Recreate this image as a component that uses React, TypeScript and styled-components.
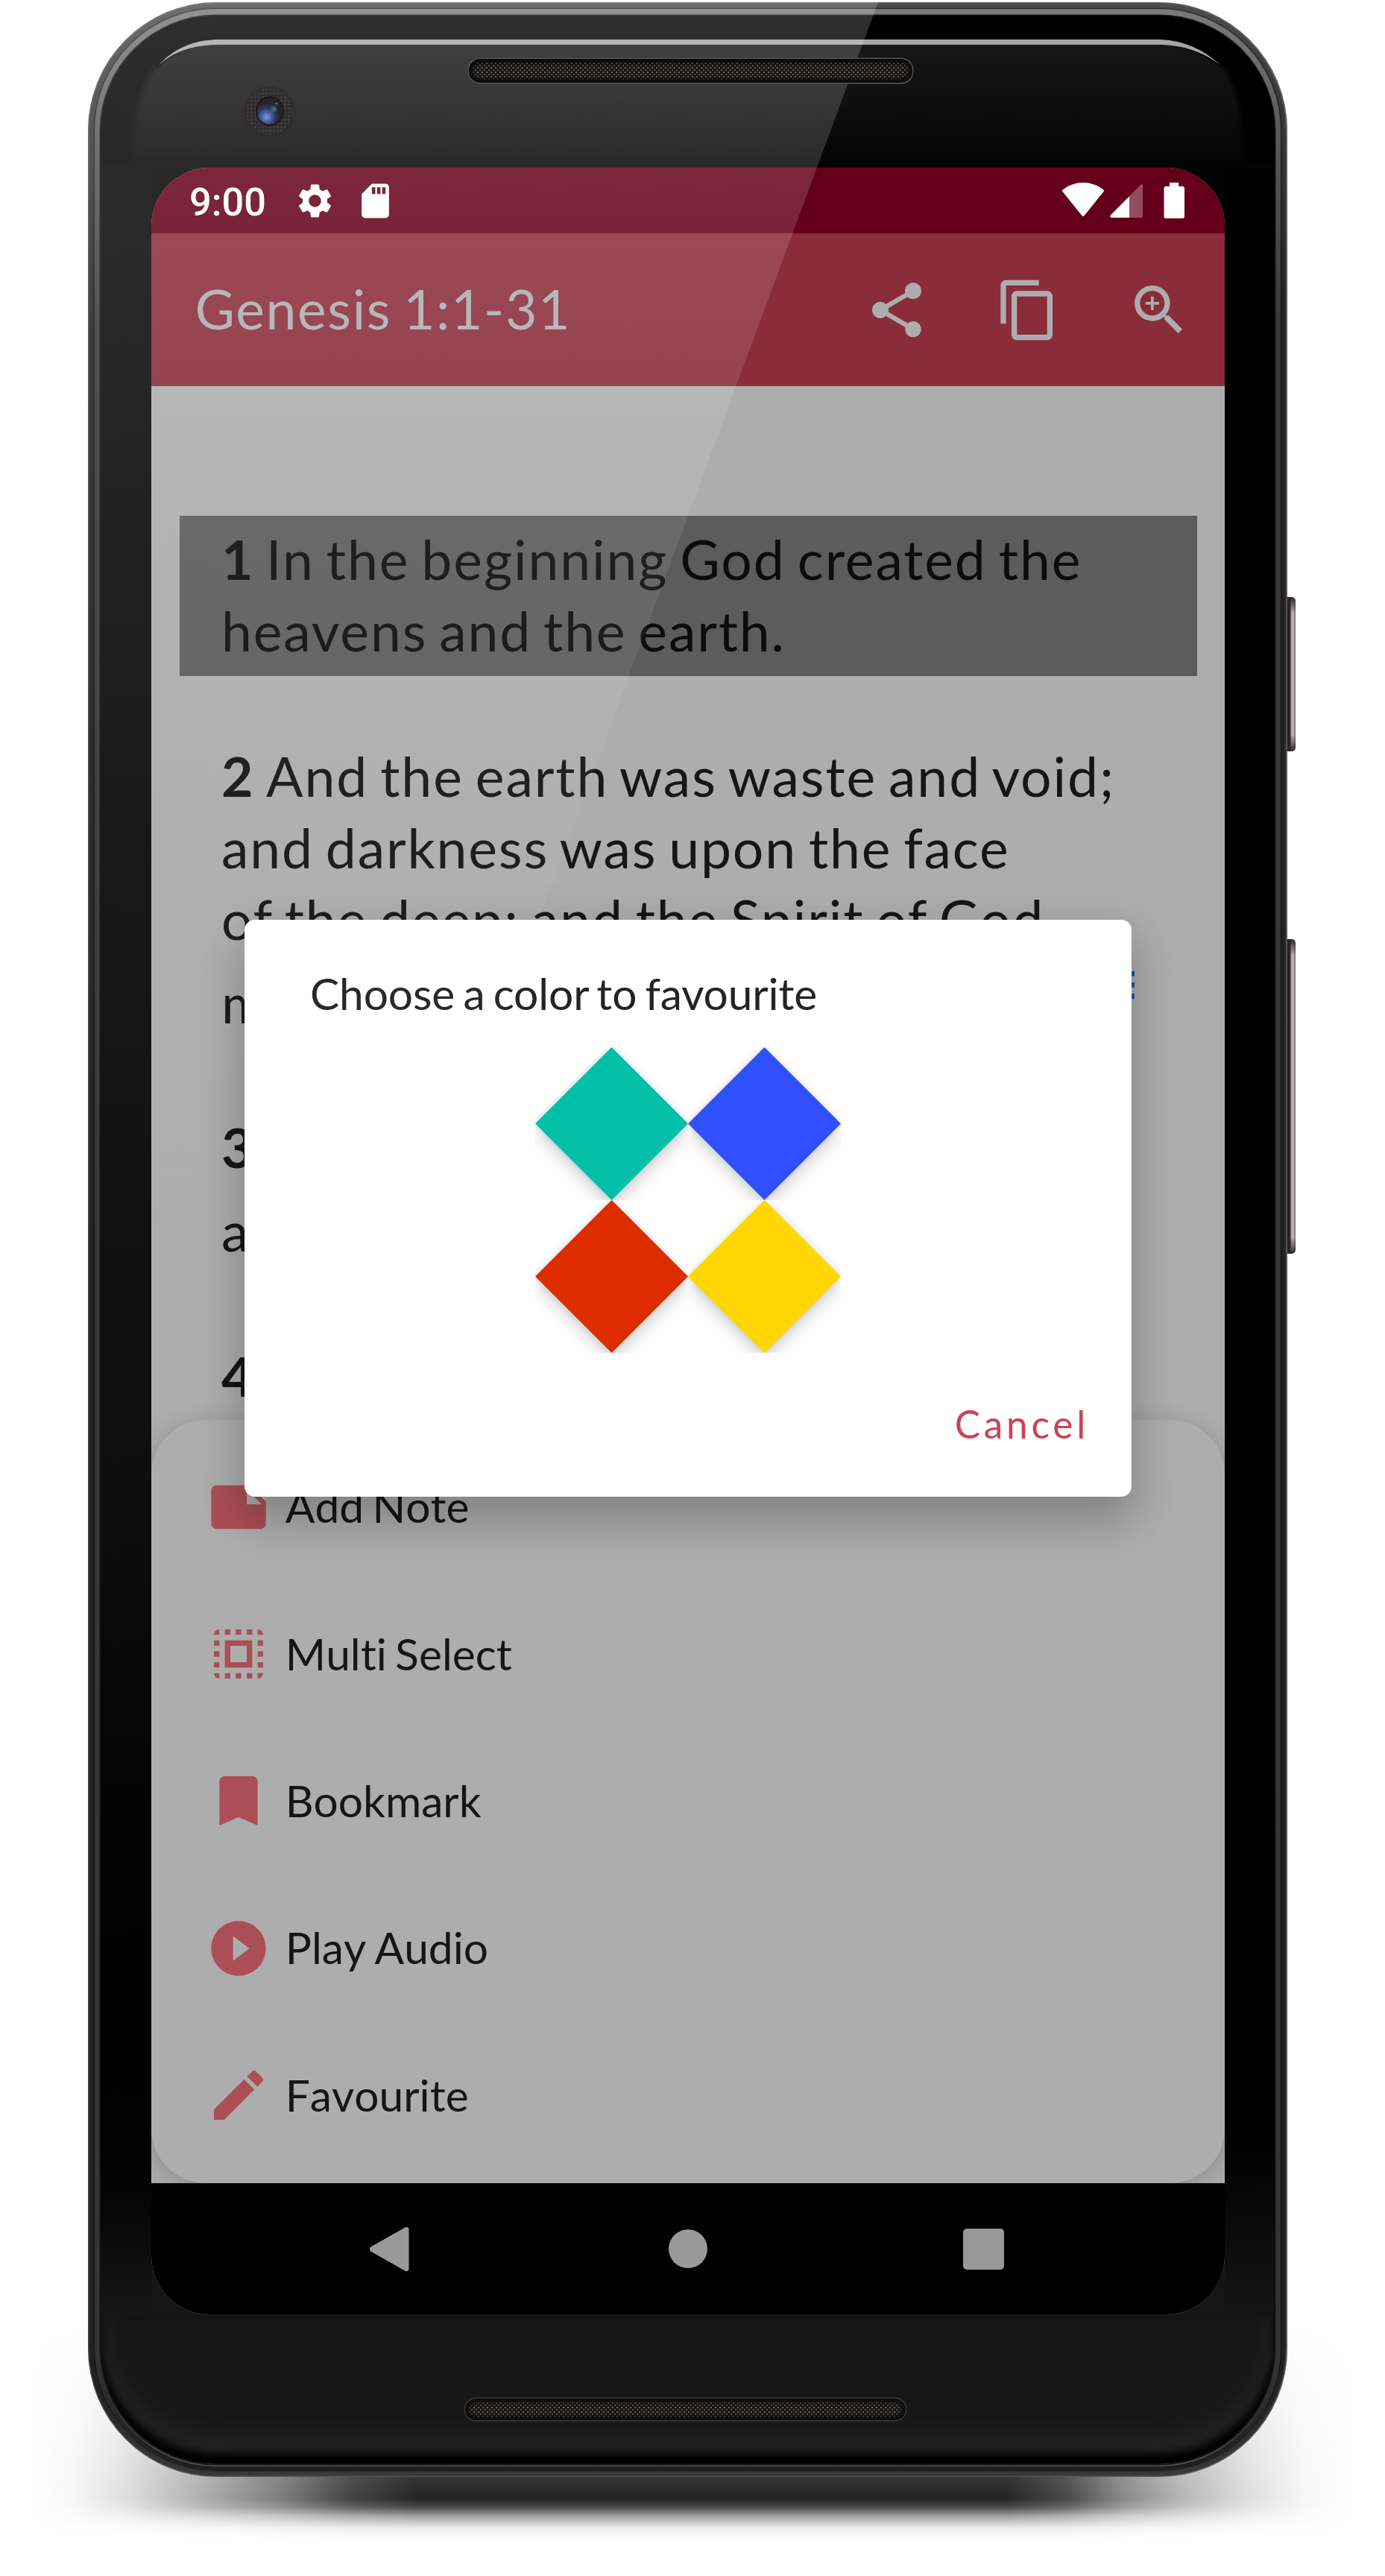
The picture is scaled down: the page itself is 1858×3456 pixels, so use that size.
import React from 'react';
import styled, { createGlobalStyle } from 'styled-components';
import type { IconType } from 'react-icons';
import {
  MdBookmark,
  MdContentCopy,
  MdEdit,
  MdNote,
  MdPlayCircleFilled,
  MdSdCard,
  MdSelectAll,
  MdSettings,
  MdShare,
  MdZoomIn,
} from 'react-icons/md';

const GlobalStyle = createGlobalStyle`
  *, *::before, *::after { box-sizing: border-box; }
  body { margin: 0; background: #fff; }
`;

/* ---------- device hardware ---------- */

const Stage = styled.main`
  position: relative;
  width: 1858px;
  height: 3456px;
  padding: 3px 0 0 118px;
  overflow: hidden;
  background: #fff;
  font-family: Lato, 'Liberation Sans', sans-serif;
  font-variant-ligatures: none;
`;

const GroundShadow = styled.div`
  position: absolute;
  left: 40px;
  top: 3120px;
  width: 1780px;
  height: 286px;
  background: linear-gradient(
    90deg,
    rgba(20, 20, 20, 0) 0,
    rgba(20, 20, 20, 0.04) 60px,
    rgba(20, 20, 20, 0.12) 120px,
    rgba(20, 20, 20, 0.34) 230px,
    rgba(20, 20, 20, 0.56) 340px,
    rgba(20, 20, 20, 0.8) 430px,
    rgba(20, 20, 20, 0.93) 520px,
    rgba(20, 20, 20, 0.93) 1310px,
    rgba(20, 20, 20, 0.78) 1390px,
    rgba(20, 20, 20, 0.52) 1460px,
    rgba(20, 20, 20, 0.32) 1540px,
    rgba(20, 20, 20, 0.13) 1640px,
    rgba(20, 20, 20, 0.04) 1710px,
    rgba(20, 20, 20, 0) 1778px
  );
  mask-image: linear-gradient(
    180deg,
    transparent 0,
    rgba(0, 0, 0, 0.45) 100px,
    rgba(0, 0, 0, 0.92) 200px,
    #000 232px,
    rgba(0, 0, 0, 0.85) 243px,
    rgba(0, 0, 0, 0.4) 257px,
    rgba(0, 0, 0, 0.1) 271px,
    transparent 285px
  );
`;

const Phone = styled.div`
  position: relative;
  width: 1609px;
  height: 3320px;
  padding: 9px;
  border-radius: 172px;
  background: linear-gradient(180deg, #4d4d4d 0, #3a3a3a 120px, #242424 420px, #222 3200px, #3a3a3a 3320px);
  box-shadow: inset 0 0 0 1.5px rgba(120, 120, 120, 0.4), inset -3px 0 2px -1px rgba(150, 150, 150, 0.35);
`;

const Rim = styled.div`
  height: 100%;
  padding: 9px 8px 8px;
  border-radius: 163px;
  background: linear-gradient(180deg, #7a7a7a 0, #5a5a5a 160px, #3a3a3a 420px, #343434 3150px, #1d1d1d 3302px);
  box-shadow: 0 0 2px 1px rgba(0, 0, 0, 0.65);
`;

const Face = styled.div`
  display: flex;
  flex-direction: column;
  height: 100%;
  overflow: hidden;
  border-radius: 155px;
  background:
    linear-gradient(180deg, #050505 0, #080808 300px, #101010 900px, #101010 1880px, #040404 2380px, #000 2650px, #020202 2900px, #161616 3090px)
      left top / 69px 100% no-repeat,
    linear-gradient(180deg, #000 0, #000 2850px, #151515 3090px) right top / 67px 100% no-repeat,
    linear-gradient(180deg, #030303 0, #030303 50%, #151515 50%);
  box-shadow: 0 0 0 1.5px #141414, 0 2px 0 1px #555;
`;

const TopBezel = styled.header`
  flex: none;
  height: 204px;
  background: linear-gradient(180deg, #000 0, #000 190px, #040404 204px);
`;

const BezelArt = styled.svg`
  display: block;
  width: 1575px;
  height: 204px;
`;

const BottomBezel = styled.footer`
  flex: none;
  display: flex;
  justify-content: center;
  width: 100%;
  height: 200px;
  padding: 113px 7px 0 0;
  border-radius: 0 0 155px 155px;
  background: linear-gradient(180deg, #141414, #171717 30px);
  box-shadow: inset 0 -14px 12px #000, inset 0 -34px 34px #262626;
`;

const Grille = styled.div<{ $w: number; $h: number; $rim: string }>`
  width: ${(p) => p.$w}px;
  height: ${(p) => p.$h}px;
  border: 3px solid #0b0b0b;
  border-radius: 15px;
  background:
    radial-gradient(circle at 50% 50%, #7d766a 0, #575146 1px, transparent 1.8px) 0 0 / 6px 6px,
    radial-gradient(circle at 50% 50%, #6d675d 0, #4a453c 1px, transparent 1.8px) 3px 3px / 6px 6px,
    #121110;
  box-shadow: 0 0 0 1.5px ${(p) => p.$rim}, inset 0 0 4px 2px #090909;
`;

const TopGrille = styled(Grille)`
  position: absolute;
  left: 511px;
  top: 75.5px;
  z-index: 3;
`;

const Camera = styled.div`
  position: absolute;
  left: 212px;
  top: 114.5px;
  z-index: 3;
  display: grid;
  place-items: center;
  width: 63px;
  height: 63px;
  border-radius: 50%;
  background:
    radial-gradient(circle, #4b4748 0.8px, transparent 1.4px) 0 0 / 5px 5px,
    #332f30;
  box-shadow: 0 0 3px 1px #2b292a;
`;

const Lens = styled.div`
  width: 34px;
  height: 36px;
  border-radius: 50%;
  background:
    radial-gradient(circle at 76% 22%, #b28fb0 0, transparent 2px),
    radial-gradient(circle at 66% 42%, rgba(90, 140, 130, 0.8) 0, transparent 6px),
    radial-gradient(circle at 36% 72%, #8292dc 0, #5165ac 18%, rgba(48, 58, 102, 0.85) 36%, transparent 54%),
    #25232c;
  box-shadow: 0 0 0 2px #1c1a1c;
`;

const SideKey = styled.div<{ $top: number; $h: number }>`
  position: absolute;
  left: 1609px;
  top: ${(p) => p.$top}px;
  width: 11px;
  height: ${(p) => p.$h}px;
  border-radius: 0 5px 5px 0;
  background:
    linear-gradient(180deg, #2c272a 0, transparent 22px, transparent calc(100% - 22px), #2c272a 100%),
    linear-gradient(90deg, #1e1a1e 0, #302a2e 4px, #a79d9d 5px, #c4baba 7px, #a89e9e 9px, #6f6666 11px);
`;

const Glare = styled.div`
  position: absolute;
  inset: 0;
  z-index: 2;
  border-radius: 172px;
  overflow: hidden;
  pointer-events: none;

  &::before {
    content: '';
    display: block;
    height: 1700px;
    background: linear-gradient(
      180deg,
      rgba(255, 255, 255, 0.185),
      rgba(255, 255, 255, 0.145) 270px,
      rgba(255, 255, 255, 0.09) 650px,
      rgba(255, 255, 255, 0.045) 1050px,
      rgba(255, 255, 255, 0)
    );
    clip-path: polygon(0 0, 1060px 0, 431px 100%, 0 100%);
  }
`;

/* ---------- screen ---------- */

const Screen = styled.section`
  position: relative;
  flex: none;
  display: flex;
  flex-direction: column;
  width: 1440px;
  height: 2880px;
  margin-left: 68px;
  overflow: hidden;
  border-radius: 78px;
  background: #adadad;
`;

const StatusBar = styled.div`
  flex: none;
  display: flex;
  align-items: center;
  justify-content: space-between;
  height: 88px;
  padding: 0 54px 0 51px;
  background: #64001a;
  color: #fff;
`;

const StatusGroup = styled.div`
  display: flex;
  align-items: center;
`;

const Clock = styled.span`
  margin: 3px 38px 0 0;
  font: 500 52.3px/60px Roboto, sans-serif;
`;

const AppBar = styled.div`
  flex: none;
  display: flex;
  align-items: center;
  justify-content: space-between;
  height: 205px;
  padding: 0 44px 0 58.5px;
  background: #8a2c3a;
  color: #adadad;
`;

const Title = styled.h1`
  margin: 0 0 3px;
  font-size: 73.3px;
  font-weight: 400;
  line-height: 88px;
  letter-spacing: 1.6px;
  word-spacing: -0.063em;
  white-space: nowrap;
`;

const Actions = styled.div`
  display: flex;
  gap: 88px;
`;

const Reader = styled.div`
  flex: 1;
  display: flex;
  flex-direction: column;
  align-items: center;
  gap: 75px;
  min-height: 0;
  padding-top: 173.5px;
  overflow: hidden;
`;

const Verse = styled.div<{ $selected?: boolean }>`
  flex: none;
  width: 1365px;
  padding: 10.5px 84px 13px 56.5px;
  background: ${(p) => (p.$selected ? '#5c5c5c' : 'transparent')};
  color: ${(p) => (p.$selected ? '#0c0c0c' : '#161616')};
  font-size: 73.3px;
  line-height: 96px;
  letter-spacing: 1.83px;
  word-spacing: -0.063em;
  white-space: nowrap;
`;

const Line = styled.div<{ $tall?: boolean }>`
  display: flex;
  justify-content: space-between;
  height: ${(p) => (p.$tall ? 112 : 96)}px;
  padding-top: ${(p) => (p.$tall ? 16 : 0)}px;
`;

const VerseText = styled.span`
  letter-spacing: 1.9px;

  b {
    margin-right: 0.5px;
  }
`;

const NoteLines = styled.span`
  display: flex;
  flex-direction: column;
  gap: 8px;
  margin-top: 6px;

  i {
    width: 16px;
    height: 7px;
    background: #0d5ab0;
  }
`;

const Sheet = styled.nav`
  position: absolute;
  left: 0;
  right: 0;
  top: 1679.5px;
  height: 1024.5px;
  padding: 18.7px 73px;
  border-radius: 73px;
  background: #adadad;
  box-shadow: 0 6px 30px 2px rgba(0, 0, 0, 0.18);
`;

const SheetRow = styled.div`
  display: flex;
  align-items: center;
  gap: 18.7px;
  height: 197.3px;
  color: #ac4e57;
`;

const SheetLabel = styled.span`
  margin-bottom: 3px;
  color: #161616;
  font-size: 58.67px;
  font-kerning: none;
  line-height: 70px;
  word-spacing: -0.063em;
`;

const Dialog = styled.div`
  position: absolute;
  left: 125px;
  top: 1009px;
  display: flex;
  flex-direction: column;
  width: 1190px;
  height: 773.5px;
  padding: 63px 57px 0 88px;
  border-radius: 14px;
  background: #fff;
  box-shadow: 0 38px 60px 2px rgba(0, 0, 0, 0.16), 0 12px 60px 8px rgba(0, 0, 0, 0.1);
`;

const DialogTitle = styled.h2`
  margin: 0 0 38px;
  color: #222425;
  font-size: 58.67px;
  font-weight: 400;
  line-height: 70px;
  letter-spacing: -0.1px;
  word-spacing: -0.063em;
`;

const Swatches = styled.div`
  display: grid;
  grid-template-columns: repeat(2, 205.2px);
  grid-auto-rows: 205.2px;
  align-self: center;
  margin-right: 31px;
`;

const Swatch = styled.button<{ $color: string }>`
  overflow: hidden;
  padding: 0;
  border: 0;
  background: none;

  &::before {
    content: '';
    display: block;
    width: 145.1px;
    height: 145.1px;
    margin: 30.05px;
    transform: rotate(45deg);
    background: ${(p) => p.$color};
    box-shadow: 9px 9px 20px rgba(0, 0, 0, 0.15), 0 0 8px rgba(0, 0, 0, 0.12);
  }
`;

const Cancel = styled.button`
  align-self: flex-end;
  margin-top: 63.5px;
  padding: 0;
  border: 0;
  background: none;
  color: #cb4256;
  font: 400 51.33px/62px Lato, sans-serif;
  letter-spacing: 4.75px;
`;

const NavBar = styled.div`
  flex: none;
  display: flex;
  justify-content: space-between;
  align-items: center;
  height: 176px;
  padding: 0 296px 0 293px;
  background: #000;
`;

const NavHome = styled.div`
  width: 52px;
  height: 52px;
  margin-left: 5px;
  border-radius: 50%;
  background: #999;
`;

const NavRecent = styled.div`
  width: 55px;
  height: 55px;
  border-radius: 5px;
  background: #999;
`;

const swatches = ['#02bfa7', '#304ffe', '#dd2c00', '#ffd600'];

const sheetItems: { label: string; icon: IconType }[] = [
  { label: 'Add Note', icon: MdNote },
  { label: 'Multi Select', icon: MdSelectAll },
  { label: 'Bookmark', icon: MdBookmark },
  { label: 'Play Audio', icon: MdPlayCircleFilled },
  { label: 'Favourite', icon: MdEdit },
];

const SdIcon = styled(MdSdCard)`
  margin-left: 26.5px;
`;

function StatusIcons() {
  return (
    <svg width="164" height="48" viewBox="0 0 164 48" fill="#fff">
      <path d="M29.4 44.4c-.8 1-2 1-2.8 0L.6 12.2C-.2 11.2 0 9.9 1 9.2 8.6 3.4 18 0 28 0s19.4 3.4 27 9.2c1 .7 1.2 2 .4 3z" />
      <path d="M108 3v41.5c0 1.4-.8 2.5-2 2.5H66.5c-1.9 0-2.7-2.2-1.4-3.5l40-40.5c1-1 2.9-1 2.9 0z" opacity=".3" />
      <path d="M90 18.4V47H66.5c-1.9 0-2.7-2.2-1.4-3.5z" />
      <path d="M144 0h12.2v5h5.3c1.4 0 2.5 1.1 2.5 2.5v38c0 1.4-1.1 2.5-2.5 2.5h-22.5c-1.4 0-2.5-1.1-2.5-2.5v-38c0-1.4 1.1-2.5 2.5-2.5h5z" />
    </svg>
  );
}

function BackGlyph() {
  return (
    <svg width="53" height="61" viewBox="0 0 53 61" fill="#999">
      <path d="M1.7 27.2 47.5 1.3c2.2-1.3 5 .2 5 2.8v52.8c0 2.6-2.8 4.1-5 2.8L1.7 33.8c-2.3-1.5-2.3-5.1 0-6.6z" />
    </svg>
  );
}

function TopGlass() {
  return (
    <BezelArt viewBox="0 0 1575 204">
      <defs>
        <linearGradient id="glass" gradientUnits="userSpaceOnUse" x1="0" y1="36" x2="0" y2="196">
          <stop offset="0" stopColor="#161616" />
          <stop offset=".5" stopColor="#0e0e0e" />
          <stop offset="1" stopColor="#040404" />
        </linearGradient>
      </defs>
      <g fill="url(#glass)" stroke="url(#glass)">
        <path d="M77 70C56 95 47 140 45 204H1530C1528 140 1522 95 1503 70 1476 48 1448 39 1416 39H160C128 39 100 48 77 70Z" stroke="none" />
        <path d="M77 70C56 95 47 140 45 204" fill="none" strokeWidth="6" opacity=".5" />
        <path d="M77 70C56 95 47 140 45 204" fill="none" strokeWidth="14" opacity=".35" />
        <path d="M1503 70C1522 95 1528 140 1530 204" fill="none" strokeWidth="6" opacity=".5" />
        <path d="M1503 70C1522 95 1528 140 1530 204" fill="none" strokeWidth="14" opacity=".35" />
      </g>
      <path
        d="M77 67C100 42 128 32 160 32H1416C1448 32 1476 42 1503 67 1476 46 1448 39 1416 39H160C128 39 100 46 77 67Z"
        fill="#a6a6a6"
      />
    </BezelArt>
  );
}

export default function App() {
  return (
    <>
      <GlobalStyle />
      <Stage>
        <GroundShadow />
        <Phone>
          <SideKey $top={798} $h={207} />
          <SideKey $top={1257} $h={422} />
          <Rim>
            <Face>
              <TopBezel>
                <TopGlass />
              </TopBezel>

              <Screen>
                <StatusBar>
                  <StatusGroup>
                    <Clock>9:00</Clock>
                    <MdSettings size={55} />
                    <SdIcon size={55} />
                  </StatusGroup>
                  <StatusIcons />
                </StatusBar>

                <AppBar>
                  <Title>Genesis 1:1-31</Title>
                  <Actions>
                    <MdShare size={88} />
                    <MdContentCopy size={88} />
                    <MdZoomIn size={88} />
                  </Actions>
                </AppBar>

                <Reader>
                  <Verse $selected>
                    <Line>
                      <VerseText>
                        <b>1 </b>In the beginning God created the
                      </VerseText>
                    </Line>
                    <Line>heavens and the earth.</Line>
                  </Verse>
                  <Verse>
                    <Line>
                      <VerseText>
                        <b>2 </b>And the earth was waste and void;
                      </VerseText>
                    </Line>
                    <Line>and darkness was upon the face</Line>
                    <Line>of the deep; and the Spirit of God</Line>
                    <Line $tall>
                      <span>m</span>
                      <NoteLines>
                        <i />
                        <i />
                        <i />
                      </NoteLines>
                    </Line>
                  </Verse>
                  <Verse>
                    <Line>
                      <b>3</b>
                    </Line>
                    <Line $tall>a</Line>
                  </Verse>
                  <Verse>
                    <Line>
                      <b>4</b>
                    </Line>
                  </Verse>
                </Reader>

                <NavBar>
                  <BackGlyph />
                  <NavHome />
                  <NavRecent />
                </NavBar>

                <Sheet>
                  {sheetItems.map(({ label, icon: Icon }) => (
                    <SheetRow key={label}>
                      <Icon size={88} />
                      <SheetLabel>{label}</SheetLabel>
                    </SheetRow>
                  ))}
                </Sheet>

                <Dialog role="dialog">
                  <DialogTitle>Choose a color to favourite</DialogTitle>
                  <Swatches>
                    {swatches.map((color) => (
                      <Swatch key={color} $color={color} />
                    ))}
                  </Swatches>
                  <Cancel>Cancel</Cancel>
                </Dialog>
              </Screen>

              <BottomBezel>
                <Grille $w={591} $h={29} $rim="#3b3a37" />
              </BottomBezel>
            </Face>
          </Rim>
          <Glare />
          <Camera>
            <Lens />
          </Camera>
          <TopGrille $w={595} $h={32} $rim="#555" />
        </Phone>
      </Stage>
    </>
  );
}
